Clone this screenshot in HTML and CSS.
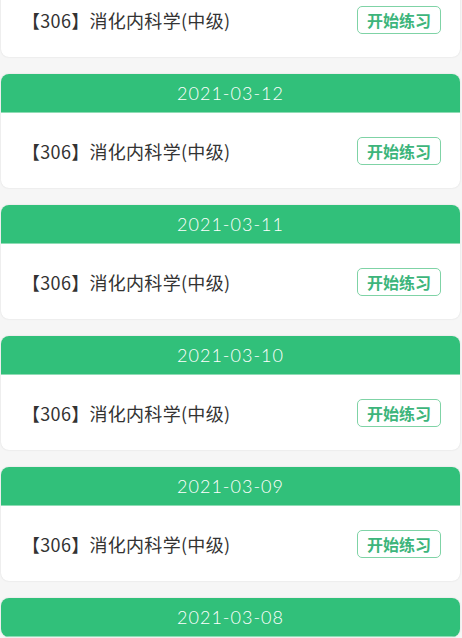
FILE: index.html
```html
<!doctype html>
<html>
    <head>
        <title>练习记录</title>
        <meta charset="utf-8">
        <link rel="stylesheet" href="styles.css">
    </head>
    <body>
        <div class="list">
            <!-- the page is scrolled: only the lower part of this card shows -->
            <div class="card">
                <div class="row">
                    <span class="name">【306】消化内科学(中级)</span>
                    <a class="start" href="#">开始练习</a>
                </div>
            </div>
            <div class="card">
                <div class="date">2021-03-12</div>
                <div class="row">
                    <span class="name">【306】消化内科学(中级)</span>
                    <a class="start" href="#">开始练习</a>
                </div>
            </div>
            <div class="card">
                <div class="date">2021-03-11</div>
                <div class="row">
                    <span class="name">【306】消化内科学(中级)</span>
                    <a class="start" href="#">开始练习</a>
                </div>
            </div>
            <div class="card">
                <div class="date">2021-03-10</div>
                <div class="row">
                    <span class="name">【306】消化内科学(中级)</span>
                    <a class="start" href="#">开始练习</a>
                </div>
            </div>
            <div class="card">
                <div class="date">2021-03-09</div>
                <div class="row">
                    <span class="name">【306】消化内科学(中级)</span>
                    <a class="start" href="#">开始练习</a>
                </div>
            </div>
            <!-- only the header of the last card is in view -->
            <div class="card">
                <div class="date">2021-03-08</div>
            </div>
        </div>
    </body>
</html>
```

FILE: styles.css
```css
body {
    margin: 0;
    background: #f6f6f6;
    font: 18px 'Noto Sans CJK SC', sans-serif;
    overflow: hidden;
}

.list {
    margin-top: -18px;
    padding: 0 2px 0 1px;
}

.card {
    background: white;
    border-radius: 8px;
    overflow: hidden;
    margin-bottom: 17px;
    box-shadow: 0 0 2px rgba(0, 0, 0, 0.12);
}

.date {
    height: 39px;
    text-align: center;
    background: #31c07a;
    color: white;
    font: 300 18px Lato, 'Open Sans', sans-serif;
    line-height: 38px;
    letter-spacing: 1px;
    border-bottom: 1px solid #8fdcb5;
    box-sizing: border-box;
}

.row {
    height: 75px;
    display: flex;
    align-items: center;
    justify-content: space-between;
    padding: 0 19px 0 21px;
}

.name {
    color: #333;
    letter-spacing: 0.3px;
}

.start {
    display: block;
    height: 26px;
    line-height: 26px;
    padding: 0 9px;
    border: 1.5px solid #7fd3a6;
    border-radius: 5px;
    color: #3db57b;
    font-size: 16px;
    font-weight: bold;
    text-decoration: none;
}
```
